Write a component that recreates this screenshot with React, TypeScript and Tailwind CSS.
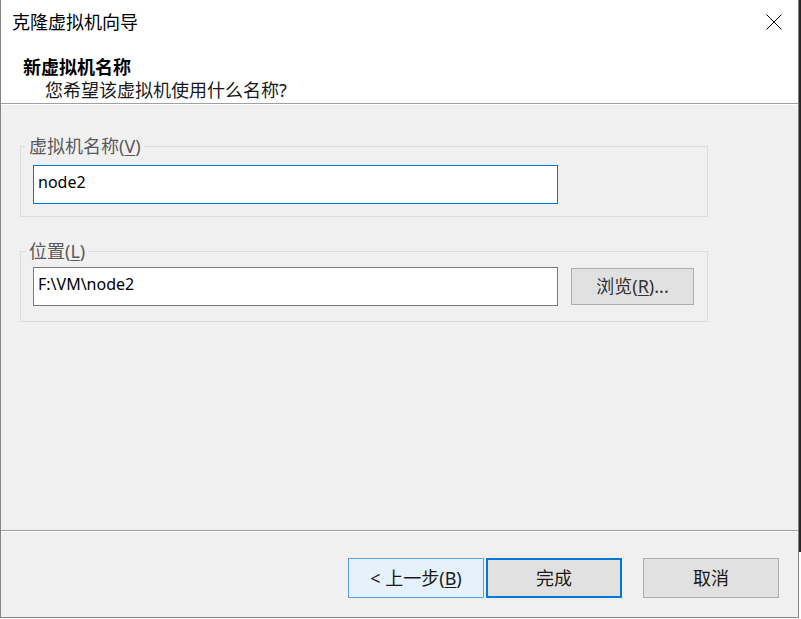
import React from "react";

const FONT = { fontFamily: '"Noto Sans", "Noto Sans CJK SC", sans-serif' };

function GroupBox({ label, hotkey, pad, children }: { label: string; hotkey: string; pad: string; children: React.ReactNode }) {
  return (
    <fieldset className={`w-[688px] border border-[#dcdcdc] px-[12px] ${pad}`}>
      <legend className="ml-[-7px] px-[3px] text-[18px] leading-[20px] text-[#5a5a5a]">
        {label}(<span className="underline underline-offset-2">{hotkey}</span>)
      </legend>
      {children}
    </fieldset>
  );
}

function Button({ children, variant }: { children: React.ReactNode; variant?: "hover" | "default" }) {
  const cls =
    variant === "hover"
      ? "border border-[#5a9fdf] bg-[#e5f1fb]"
      : variant === "default"
      ? "border-2 border-[#0078d7] bg-[#e1e1e1]"
      : "border border-[#adadad] bg-[#e1e1e1]";
  return (
    <button className={`flex h-[40px] w-[136px] items-center justify-center text-[18px] text-[#1a1a1a] ${cls}`}>
      {children}
    </button>
  );
}

export default function App() {
  return (
    <div className="flex h-[619px] w-[801px] bg-white" style={FONT}>
      <div className="flex h-[618px] w-[799px] flex-col border-x border-b border-[#858585]">
        <div className="h-[103px] bg-white">
          <div className="flex h-[44px] items-center justify-between pl-[11px] pr-[16px]">
            <span className="text-[18px] text-black">克隆虚拟机向导</span>
            <svg width="16" height="16" viewBox="0 0 16 16" className="text-black">
              <path d="M0.5 0.5 L15.5 15.5 M15.5 0.5 L0.5 15.5" stroke="currentColor" strokeWidth="1" fill="none" />
            </svg>
          </div>
          <div className="pl-[22px] pt-[12px]">
            <div className="text-[18px] font-bold leading-[22px] text-black">新虚拟机名称</div>
            <div className="ml-[22px] mt-[1px] text-[18px] leading-[22px] text-[#1a1a1a]">您希望该虚拟机使用什么名称?</div>
          </div>
        </div>
        <div className="h-px bg-[#a0a0a0]" />
        <div className="h-px bg-white" />

        <div className="flex flex-1 flex-col gap-[24px] bg-[#f0f0f0] pl-[19px] pt-[31px]">
          <GroupBox label="虚拟机名称" hotkey="V" pad="pt-[9px] pb-[12px]">
            <div className="flex h-[39px] w-[525px] items-start border border-[#0078d7] bg-white pl-[4px] pt-[4px] text-[16px] text-black">
              node2
            </div>
          </GroupBox>
          <GroupBox label="位置" hotkey="L" pad="pt-[6px] pb-[15px]">
            <div className="flex items-center gap-[13px]">
              <div className="flex h-[39px] w-[525px] items-start border border-[#7a7a7a] bg-white pl-[4px] pt-[4px] text-[16px] text-black">
                F:\VM\node2
              </div>
              <button className="flex h-[37px] w-[123px] items-center justify-center border border-[#adadad] bg-[#e1e1e1] text-[18px] text-[#333]">
                浏览(<span className="underline underline-offset-2">R</span>)...
              </button>
            </div>
          </GroupBox>
        </div>

        <div className="h-px bg-[#a0a0a0]" />
        <div className="h-px bg-white" />
        <div className="flex items-center justify-end bg-[#f0f0f0] pb-[19px] pr-[19px] pt-[26px]">
          <Button variant="hover">
            &lt; 上一步(<span className="underline underline-offset-2">B</span>)
          </Button>
          <div className="w-[2px]" />
          <Button variant="default">完成</Button>
          <div className="w-[21px]" />
          <Button>取消</Button>
        </div>
      </div>
      <div className="flex w-[2px] flex-col">
        <div className="h-[552px] bg-[#262626]" />
      </div>
    </div>
  );
}
